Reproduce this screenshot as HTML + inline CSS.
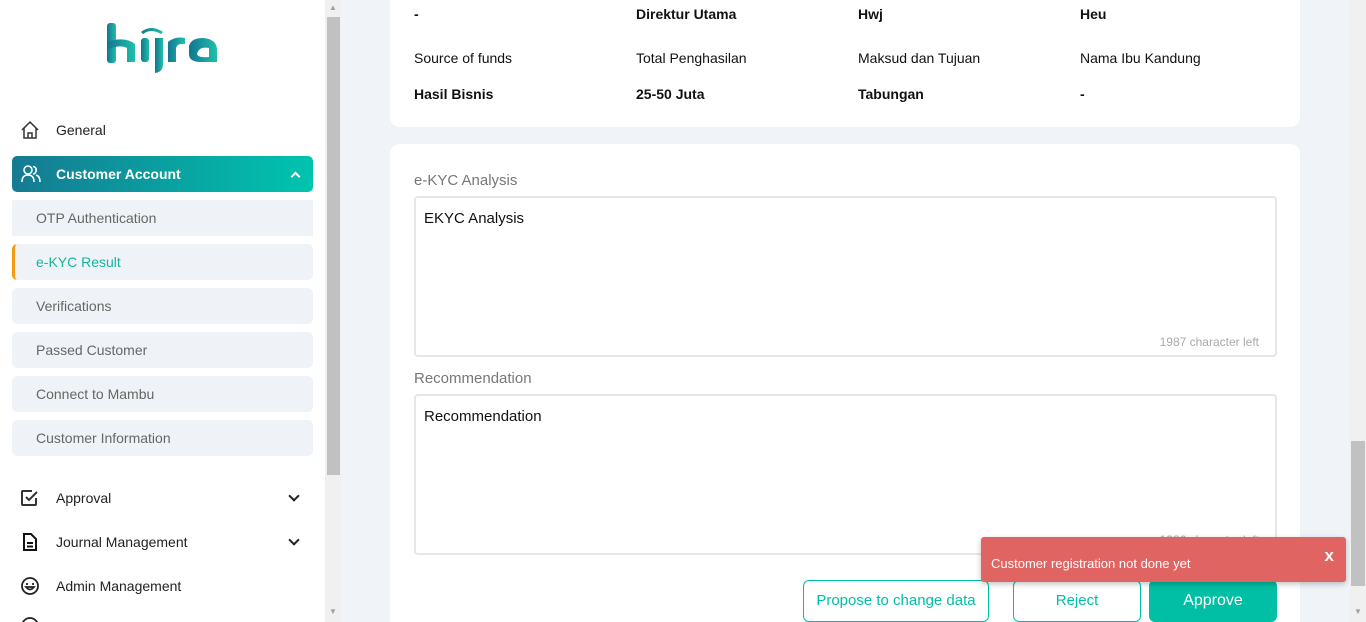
<!DOCTYPE html>
<html style="width:1366px;height:622px;overflow:hidden"><head><style>
*{box-sizing:border-box;margin:0;padding:0}
body{width:1366px;height:622px;overflow:hidden;font-family:"Liberation Sans",sans-serif;background:#f0f4f8;position:relative;color:#111}
.side{position:absolute;left:0;top:0;width:325px;height:622px;background:#fff}
.sb{position:absolute;left:325px;top:0;width:16px;height:622px;background:#f0f0f0}
.sb .t{position:absolute;left:2px;top:17px;width:13px;height:458px;background:#c1c1c1}
.rsb{position:absolute;left:1350px;top:0;width:16px;height:622px;background:#f0f0f0}
.rsb .t{position:absolute;left:1px;top:441px;width:14px;height:145px;background:#c1c1c1}
.arr{position:absolute;font-size:8px;color:#a0a0a0;left:4px}
.nav{position:absolute;left:20px;font-size:14px;color:#222;display:flex;align-items:center}
.nav span{position:absolute;left:36px;white-space:nowrap}
.ca{position:absolute;left:12px;top:156px;width:301px;height:36px;border-radius:5px;background:linear-gradient(90deg,#157a92,#00c4ae);color:#fff;font-size:14px;font-weight:bold}
.sub{position:absolute;left:12px;width:301px;height:36px;background:#eff3f7;border-radius:5px;font-size:14px;color:#666;padding:10px 0 0 24px}
.chev{position:absolute;left:290px;width:8px;height:8px;border-right:2px solid #222;border-bottom:2px solid #222;transform:rotate(45deg)}
.card{position:absolute;left:390px;width:910px;background:#fff;border-radius:10px}
.c{position:absolute;font-size:14px;white-space:nowrap}
.b{font-weight:bold}
.lab{position:absolute;left:414px;font-size:15px;color:#777}
.ta{position:absolute;left:414px;width:863px;height:161px;border:2px solid #e6e6e6;border-radius:4px;font-size:15px;padding:12px 8px}
.ta small{position:absolute;right:16px;bottom:6px;font-size:12px;color:#aaa}
.btn{position:absolute;top:580px;height:42px;border:1px solid #00bfa5;border-radius:6px;color:#00bfa5;font-size:15px;text-align:center;line-height:40px;background:#fff}
.toast{position:absolute;left:981px;top:537px;width:365px;height:45px;background:#e06461;border-radius:3px;color:#fff;font-size:13px;padding:19px 0 0 10px;box-shadow:0 2px 6px rgba(0,0,0,.25)}
.toast b{position:absolute;right:12px;top:9px;font-size:17px}
</style></head><body>
<div class="side">
<svg style="position:absolute;left:105px;top:22px" width="115" height="52" viewBox="0 0 115 52"><defs><linearGradient id="g" x1="0" x2="1"><stop offset="0" stop-color="#137592"/><stop offset="1" stop-color="#1fc0aa"/></linearGradient></defs>
<g fill="url(#g)"><rect x="2" y="1" width="9" height="40" rx="3"/><path d="M2 20 Q20 14 30 22 L30 40 L22 40 L22 26 Q14 22 2 28Z"/><rect x="36" y="16" width="8" height="24" rx="3"/><path d="M50 16h8v26q0 8-8 9z"/><path d="M36 10 Q46 2 58 10 L56 12 Q46 6 38 12Z"/><path d="M63 20 Q70 14 80 16 L80 22 Q72 21 71 26 L71 40 L63 40Z"/><path d="M84 24 Q86 16 98 16 Q112 17 112 28 L112 40 L96 40 Q84 40 84 32Z M92 32 Q93 36 104 35 L104 26 Q94 24 92 32Z"/></g></svg>
<div class="nav" style="top:120px"><svg width="20" height="20" viewBox="0 0 20 20" fill="none" stroke="#333" stroke-width="1.5"><path d="M2 10 L10 2 L18 10 M4 8 V18 H16 V8 M8 18 V13 H12 V18"/></svg><span>General</span></div>
<div class="ca"><svg style="position:absolute;left:9px;top:9px" width="20" height="18" viewBox="0 0 20 18" fill="none" stroke="#fff" stroke-width="1.6"><circle cx="7" cy="5" r="4"/><path d="M1 17 Q1 10 7 10 Q13 10 13 17 M12 1.5 Q16 2 15 6.5 Q14 9 12 9 M15 10 Q19 11 19 17"/></svg><span style="position:absolute;left:44px;top:10px">Customer Account</span><div style="position:absolute;left:280px;top:17px;width:7px;height:7px;border-left:2px solid #fff;border-top:2px solid #fff;transform:rotate(45deg)"></div></div>
<div class="sub" style="top:200px;border-radius:0">OTP Authentication</div>
<div class="sub" style="top:244px;color:#16b59e;border-left:3px solid #f39c12;padding-left:21px">e-KYC Result</div>
<div class="sub" style="top:288px">Verifications</div>
<div class="sub" style="top:332px">Passed Customer</div>
<div class="sub" style="top:376px">Connect to Mambu</div>
<div class="sub" style="top:420px">Customer Information</div>
<div class="nav" style="top:488px"><svg width="20" height="20" viewBox="0 0 20 20" fill="none" stroke="#333" stroke-width="2"><path d="M16 10 V16 Q16 17 15 17 H3 Q2 17 2 16 V4 Q2 3 3 3 H12"/><path d="M6 9 L9 12 L17 4"/></svg><span>Approval</span></div>
<div class="chev" style="top:492px"></div>
<div class="nav" style="top:532px"><svg width="20" height="20" viewBox="0 0 20 20" fill="none" stroke="#111" stroke-width="2"><path d="M4 2 H11 L16 7 V18 H4Z M7 11 H13 M7 14.5 H13"/></svg><span>Journal Management</span></div>
<div class="chev" style="top:536px"></div>
<div class="nav" style="top:576px"><svg width="20" height="20" viewBox="0 0 20 20" fill="none" stroke="#222" stroke-width="1.8"><circle cx="10" cy="10" r="8"/><path d="M6 8 H8 M12 8 H14 M6 11 Q10 16 14 11Z"/></svg><span>Admin Management</span></div>
<svg style="position:absolute;left:20px;top:616px" width="20" height="6"><circle cx="10" cy="10" r="8" fill="none" stroke="#222" stroke-width="1.8"/></svg>
</div>
<div class="sb"><div class="t"></div><div class="arr" style="top:3px">▲</div><div class="arr" style="top:607px">▼</div></div>
<div class="card" style="top:-10px;height:137px"></div>
<div class="c b" style="left:414px;top:6px">-</div>
<div class="c b" style="left:636px;top:6px">Direktur Utama</div>
<div class="c b" style="left:858px;top:6px">Hwj</div>
<div class="c b" style="left:1080px;top:6px">Heu</div>
<div class="c" style="left:414px;top:50px">Source of funds</div>
<div class="c" style="left:636px;top:50px">Total Penghasilan</div>
<div class="c" style="left:858px;top:50px">Maksud dan Tujuan</div>
<div class="c" style="left:1080px;top:50px">Nama Ibu Kandung</div>
<div class="c b" style="left:414px;top:86px">Hasil Bisnis</div>
<div class="c b" style="left:636px;top:86px">25-50 Juta</div>
<div class="c b" style="left:858px;top:86px">Tabungan</div>
<div class="c b" style="left:1080px;top:86px">-</div>
<div class="card" style="top:144px;height:478px;border-radius:10px 10px 0 0"></div>
<div class="lab" style="top:172px">e-KYC Analysis</div>
<div class="ta" style="top:196px">EKYC Analysis<small>1987 character left</small></div>
<div class="lab" style="top:370px">Recommendation</div>
<div class="ta" style="top:394px">Recommendation<small>1986 character left</small></div>
<div class="btn" style="left:803px;width:186px">Propose to change data</div>
<div class="btn" style="left:1013px;width:128px">Reject</div>
<div class="btn" style="left:1149px;width:128px;background:#00bfa5;color:#fff;font-size:16px">Approve</div>
<div class="toast">Customer registration not done yet<b>x</b></div>
<div class="rsb"><div class="t"></div><div class="arr" style="top:607px">▼</div></div>
</body></html>
